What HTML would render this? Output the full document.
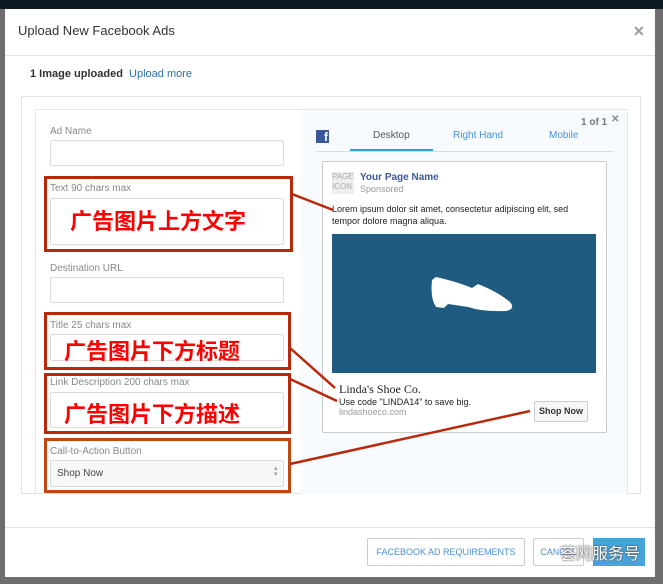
<!DOCTYPE html>
<html><head><meta charset="utf-8"><style>
*{margin:0;padding:0;box-sizing:border-box}
body{width:663px;height:584px;background:#6e6e6e;position:relative;overflow:hidden;font-family:"Liberation Sans","Noto Sans CJK SC",sans-serif}
.a{position:absolute}
.lbl{font-size:10px;color:#888}
.inp{position:absolute;border:1px solid #dcdcdc;border-radius:2px;background:#fff}
.red{position:absolute;border:3px solid #b8290c}
.cn{position:absolute;color:#f00;font-size:22px;font-weight:bold;letter-spacing:0px;font-family:"WenQuanYi Zen Hei","Noto Sans CJK SC",sans-serif;white-space:nowrap}
</style></head><body>
<div class="a" style="left:0;top:0;width:663px;height:9px;background:#0b1a25"></div>
<div class="a" style="left:5px;top:9px;width:650px;height:568px;background:#fff"></div>
<div class="a" style="left:18px;top:23px;font-size:13px;color:#333">Upload New Facebook Ads</div>
<div class="a" style="left:633px;top:23px;font-size:14px;color:#999;font-weight:bold">✕</div>
<div class="a" style="left:5px;top:55px;width:650px;height:1px;background:#e2e2e2"></div>
<div class="a" style="left:30px;top:68px;font-size:11px;color:#333"><b>1 Image uploaded</b>&nbsp; <span style="color:#2a6fa8">Upload more</span></div>
<div class="a" style="left:21px;top:96px;width:620px;height:398px;border:1px solid #e2e2e2"></div>
<div class="a" style="left:35px;top:109px;width:593px;height:385px;border:1px solid #e6e6e6;border-bottom:none"></div>
<div class="a" style="left:301px;top:110px;width:326px;height:384px;background:#f7fbfd"></div>

<div class="a lbl" style="left:50px;top:126px">Ad Name</div>
<div class="inp" style="left:50px;top:140px;width:234px;height:26px"></div>
<div class="a lbl" style="left:50px;top:183px">Text 90 chars max</div>
<div class="inp" style="left:50px;top:198px;width:234px;height:47px"></div>
<div class="cn" style="left:70px;top:204px">广告图片上方文字</div>
<div class="a lbl" style="left:50px;top:263px">Destination URL</div>
<div class="inp" style="left:50px;top:277px;width:234px;height:26px"></div>
<div class="a lbl" style="left:50px;top:320px">Title 25 chars max</div>
<div class="inp" style="left:50px;top:334px;width:234px;height:27px"></div>
<div class="cn" style="left:64px;top:334px">广告图片下方标题</div>
<div class="a lbl" style="left:50px;top:377px">Link Description 200 chars max</div>
<div class="inp" style="left:50px;top:392px;width:234px;height:36px"></div>
<div class="cn" style="left:64px;top:397px">广告图片下方描述</div>
<div class="a lbl" style="left:50px;top:446px">Call-to-Action Button</div>
<div class="inp" style="left:50px;top:460px;width:234px;height:27px;background:#f7f9f9"></div>
<div class="a" style="left:57px;top:468px;font-size:10px;color:#444">Shop Now</div>
<div class="a" style="left:274px;top:466px;font-size:7px;color:#999;line-height:6px">▴<br>▾</div>

<div class="red" style="left:44px;top:176px;width:249px;height:76px"></div>
<div class="red" style="left:44px;top:312px;width:247px;height:58px"></div>
<div class="red" style="left:44px;top:373px;width:247px;height:61px"></div>
<div class="red" style="left:44px;top:438px;width:247px;height:55px;border-color:#c0470f"></div>

<div class="a" style="left:316px;top:130px;width:13px;height:13px;background:#3b5998;color:#fff;font-size:12px;font-weight:bold;line-height:15px;text-align:right;padding-right:1px">f</div>
<div class="a" style="left:373px;top:130px;font-size:10px;color:#555">Desktop</div>
<div class="a" style="left:453px;top:130px;font-size:10px;color:#4a90d9">Right Hand</div>
<div class="a" style="left:549px;top:130px;font-size:10px;color:#4a90d9">Mobile</div>
<div class="a" style="left:581px;top:117px;font-size:10px;color:#777;font-weight:bold">1 of 1</div>
<div class="a" style="left:611px;top:114px;font-size:10px;color:#888;font-weight:bold">✕</div>
<div class="a" style="left:316px;top:151px;width:297px;height:1px;background:#d8dde0"></div>
<div class="a" style="left:350px;top:149px;width:83px;height:2px;background:#2aa5e0"></div>

<div class="a" style="left:322px;top:161px;width:285px;height:272px;background:#fff;border:1px solid #ccc;border-radius:2px"></div>
<div class="a" style="left:332px;top:172px;width:22px;height:22px;background:#eee;font-size:8px;color:#aaa;line-height:10px;overflow:hidden">PAGE ICON</div>
<div class="a" style="left:360px;top:172px;font-size:10px;color:#3b5998;font-weight:bold">Your Page Name</div>
<div class="a" style="left:360px;top:184px;font-size:9px;color:#999">Sponsored</div>
<div class="a" style="left:332px;top:203px;width:265px;font-size:9px;color:#222;line-height:12px">Lorem ipsum dolor sit amet, consectetur adipiscing elit, sed tempor dolore magna aliqua.</div>
<div class="a" style="left:332px;top:234px;width:264px;height:139px;background:#1f5b80"></div>
<svg class="a" style="left:428px;top:276px" width="88" height="44" viewBox="0 0 88 44"><path d="M4 4 L8 1 Q30 6 44 12 L50 8 Q70 16 82 26 Q88 33 78 35 Q55 36 40 31 L20 28 L16 32 L8 31 Q2 22 4 4Z" fill="#fff"/></svg>
<div class="a" style="left:339px;top:382px;font-size:12px;color:#222;font-family:'Liberation Serif',serif">Linda's Shoe Co.</div>
<div class="a" style="left:339px;top:397px;font-size:9px;color:#222">Use code "LINDA14" to save big.</div>
<div class="a" style="left:339px;top:407px;font-size:9px;color:#999">lindashoeco.com</div>
<div class="a" style="left:534px;top:401px;width:54px;height:21px;border:1px solid #ccc;border-radius:2px;background:#f6f7f8;font-size:9px;font-weight:bold;color:#333;text-align:center;line-height:19px">Shop Now</div>

<svg class="a" style="left:0;top:0" width="663" height="584"><g stroke="#b8290c" stroke-width="2.5"><line x1="292" y1="194" x2="333" y2="210"/><line x1="290" y1="348" x2="335" y2="388"/><line x1="290" y1="379" x2="337" y2="401"/><line x1="290" y1="464" x2="530" y2="411"/></g></svg>

<div class="a" style="left:5px;top:527px;width:650px;height:1px;background:#e2e2e2"></div>
<div class="a" style="left:367px;top:538px;width:158px;height:28px;border:1px solid #ccc;border-radius:2px;font-size:9px;color:#4a90d9;text-align:center;line-height:26px">FACEBOOK AD REQUIREMENTS</div>
<div class="a" style="left:533px;top:538px;width:51px;height:28px;border:1px solid #ccc;border-radius:2px;font-size:9px;color:#4a90d9;text-align:center;line-height:26px">CANCEL</div>
<div class="a" style="left:593px;top:538px;width:52px;height:28px;background:#45a4dc"></div>
<div class="a" style="left:560px;top:540px;font-size:16px;color:#fff;text-shadow:0 0 2px #555,0 0 1px #333;font-family:'Noto Sans CJK SC',sans-serif">荟网服务号</div>
</body></html>
